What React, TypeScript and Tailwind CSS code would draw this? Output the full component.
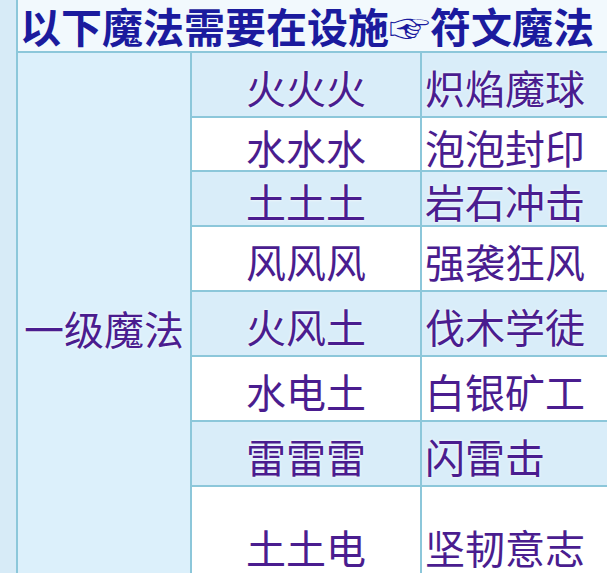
const rows = [
  { combo: "火火火", name: "炽焰魔球", h: "h-[65px]", light: true },
  { combo: "水水水", name: "泡泡封印", h: "h-[54px]", light: false },
  { combo: "土土土", name: "岩石冲击", h: "h-[55px]", light: true },
  { combo: "风风风", name: "强袭狂风", h: "h-[65px]", light: false },
  { combo: "火风土", name: "伐木学徒", h: "h-[65px]", light: true },
  { combo: "水电土", name: "白银矿工", h: "h-[65px]", light: false },
  { combo: "雷雷雷", name: "闪雷击", h: "h-[65px]", light: true },
  { combo: "土土电", name: "坚韧意志", h: "h-[116px]", light: false },
];

const App = () => {
  return (
    <main
      className="h-[573px] w-[607px] overflow-hidden bg-[#d7ebf7] pl-[16px]"
      style={{ fontFamily: '"Noto Sans CJK SC", "Noto Sans", sans-serif' }}
    >
      <div className="border-l-2 border-[#8cc7da]">
        {/* title bar */}
        <div className="flex h-[53px] items-center whitespace-nowrap border-b-2 border-[#8cc7da] bg-[#f2f9fd] pl-[2px] text-[41px] font-bold leading-none text-[#1b1b9e]">
          以下魔法需要在设施☞符文魔法
        </div>

        <div className="flex">
          <div className="flex w-[174px] shrink-0 items-center justify-center border-r-2 border-[#8cc7da] bg-[#dcf0fb] text-[40px] leading-none text-[#4a1d8f] [text-shadow:0_0_3px_#ffffff]">
            一级魔法
          </div>

          <div className="flex flex-1 flex-col">
            {rows.map((r) => (
              <div
                key={r.combo}
                className={`flex ${r.h} border-b-2 border-[#8cc7da] ${r.light ? "bg-[#d9edf9]" : "bg-white"}`}
              >
                <div className="flex w-[230px] shrink-0 items-center justify-center border-r-2 border-[#8cc7da] pt-[5px] text-[40px] leading-none text-[#4a1d8f] [text-shadow:0_0_3px_#ffffff]">
                  {r.combo}
                </div>
                <div className="flex items-center whitespace-nowrap pl-[3px] pt-[5px] text-[40px] leading-none text-[#4a1d8f] [text-shadow:0_0_3px_#ffffff]">
                  {r.name}
                </div>
              </div>
            ))}
          </div>
        </div>
      </div>
    </main>
  );
};

export default App;
